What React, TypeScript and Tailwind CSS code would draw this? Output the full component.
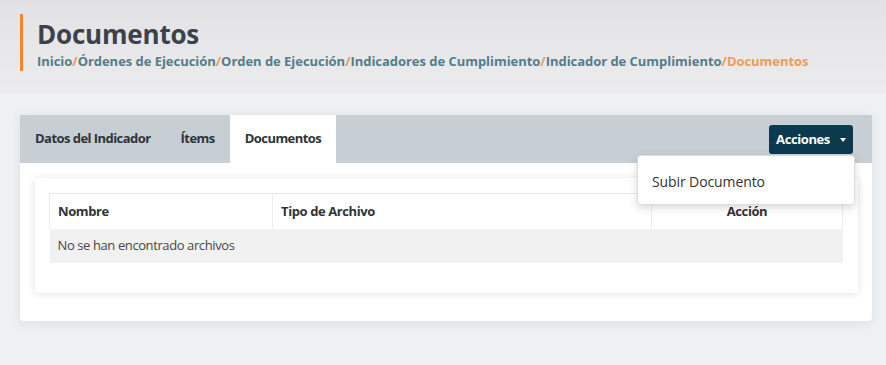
import { useState } from 'react'

const crumbs = [
  'Inicio',
  'Órdenes de Ejecución',
  'Orden de Ejecución',
  'Indicadores de Cumplimiento',
  'Indicador de Cumplimiento',
]

export default function App() {
  const [open] = useState(true)

  return (
    <div className="min-h-screen bg-[#eef1f4] font-['Open_Sans',sans-serif] text-[#333]">
      {/* Page header */}
      <header className="h-[93px] bg-gradient-to-b from-[#e2e2e4] to-[#ececee] px-5 pt-[14px]">
        <div className="h-[57px] border-l-[3px] border-[#f0872a] pl-[14px]">
          <h1 className="pt-[4px] text-[26px] font-bold leading-[32px] tracking-[-0.2px] text-[#3b424a]">
            Documentos
          </h1>
          <nav className="mt-[2px] text-[13px] font-bold leading-[18px] tracking-[-0.04px]">
            {crumbs.map((c) => (
              <span key={c}>
                <span className="text-[#557c88]">{c}</span>
                <span className="text-[#ee9b55]">/</span>
              </span>
            ))}
            <span className="text-[#ee9b55]">Documentos</span>
          </nav>
        </div>
      </header>

      <main className="px-5 pt-[22px]">
        <div className="w-[852px] rounded-b-[4px] bg-white shadow-[0_2px_12px_rgba(0,0,0,0.08)]">
          {/* Tabs */}
          <div className="relative flex h-[48px] items-stretch bg-[#c7cfd5] text-[13px] font-bold tracking-[-0.55px] text-[#2f3338]">
            <button className="px-[15px]">Datos del Indicador</button>
            <button className="px-[15px]">Ítems</button>
            <button className="bg-white px-[15px]">Documentos</button>

            <div className="absolute right-[19px] top-[10px]">
              <button className="flex h-[29px] w-[84px] items-center justify-center gap-[10px] rounded-[3px] bg-[#0b3a4e] text-[13px] font-bold tracking-[-0.4px] text-white">
                Acciones
                <span className="h-0 w-0 border-l-[3.5px] border-r-[3.5px] border-t-[4px] border-l-transparent border-r-transparent border-t-white" />
              </button>
              {open && (
                <div className="absolute right-[-2px] top-[30px] z-10 h-[50px] w-[218px] rounded-[4px] border border-[#dcdcdc] bg-white shadow-[0_3px_8px_rgba(0,0,0,0.15)]">
                  <div className="px-[14px] pt-[15px] text-[14px] font-normal tracking-[-0.1px] text-[#333]">Subir Documento</div>
                </div>
              )}
            </div>
          </div>

          {/* Body */}
          <div className="px-[15px] pb-[28px] pt-[15px]">
            <div className="w-[823px] rounded-[3px] bg-white px-[14px] pb-[30px] pt-[15px] shadow-[0_1px_8px_rgba(0,0,0,0.12)]">
              <table className="w-[794px] border-collapse text-[13px] tracking-[-0.4px]">
                <thead>
                  <tr className="h-[35px] border-t border-[#e8e8e8]">
                    <th className="w-[223px] border-x border-[#ececec] px-[8px] text-left font-bold text-[#333]">Nombre</th>
                    <th className="w-[379px] border-r border-[#ececec] px-[8px] text-left font-bold text-[#333]">Tipo de Archivo</th>
                    <th className="border-r border-[#ececec] px-[8px] text-center font-bold text-[#333]">Acción</th>
                  </tr>
                </thead>
                <tbody>
                  <tr className="h-[34px] bg-[#f1f1f1]">
                    <td colSpan={3} className="px-[8px] text-[#474747]">No se han encontrado archivos</td>
                  </tr>
                </tbody>
              </table>
            </div>
          </div>
        </div>
      </main>
    </div>
  )
}
